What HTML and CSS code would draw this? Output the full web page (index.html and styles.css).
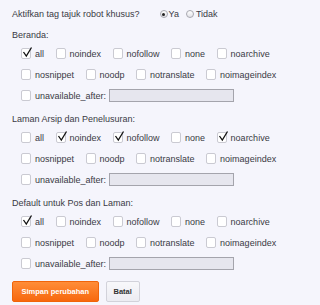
FILE: index.html
```html
<!DOCTYPE html>
<html lang="id">
<head>
  <meta charset="UTF-8">
  <title>Tag tajuk robot khusus</title>
  <link rel="stylesheet" href="styles.css">
</head>
<body>
<div class="question">
  <span>Aktifkan tag tajuk robot khusus?</span>
  <span class="choices">
    <label class="radio-opt"><span class="radio on"></span>Ya</label>
    <label class="radio-opt"><span class="radio"></span>Tidak</label>
  </span>
</div>

<div class="section">
  <div class="section-title">Beranda:</div>
  <div class="row">
    <label class="opt"><span class="cb on"><svg width="12" height="14" viewBox="0 0 12 14"><path d="M1.5 7 L4.3 11 L9.5 2.5" /></svg></span>all</label>
    <label class="opt"><span class="cb"></span>noindex</label>
    <label class="opt"><span class="cb"></span>nofollow</label>
    <label class="opt"><span class="cb"></span>none</label>
    <label class="opt"><span class="cb"></span>noarchive</label>
  </div>
  <div class="row">
    <label class="opt"><span class="cb"></span>nosnippet</label>
    <label class="opt"><span class="cb"></span>noodp</label>
    <label class="opt"><span class="cb"></span>notranslate</label>
    <label class="opt"><span class="cb"></span>noimageindex</label>
  </div>
  <div class="row">
    <label class="opt"><span class="cb"></span>unavailable_after:</label>
    <input class="date" type="text">
  </div>
</div>

<div class="section">
  <div class="section-title">Laman Arsip dan Penelusuran:</div>
  <div class="row">
    <label class="opt"><span class="cb"></span>all</label>
    <label class="opt"><span class="cb on"><svg width="12" height="14" viewBox="0 0 12 14"><path d="M1.5 7 L4.3 11 L9.5 2.5" /></svg></span>noindex</label>
    <label class="opt"><span class="cb on"><svg width="12" height="14" viewBox="0 0 12 14"><path d="M1.5 7 L4.3 11 L9.5 2.5" /></svg></span>nofollow</label>
    <label class="opt"><span class="cb"></span>none</label>
    <label class="opt"><span class="cb on"><svg width="12" height="14" viewBox="0 0 12 14"><path d="M1.5 7 L4.3 11 L9.5 2.5" /></svg></span>noarchive</label>
  </div>
  <div class="row">
    <label class="opt"><span class="cb"></span>nosnippet</label>
    <label class="opt"><span class="cb"></span>noodp</label>
    <label class="opt"><span class="cb"></span>notranslate</label>
    <label class="opt"><span class="cb"></span>noimageindex</label>
  </div>
  <div class="row">
    <label class="opt"><span class="cb"></span>unavailable_after:</label>
    <input class="date" type="text">
  </div>
</div>

<div class="section">
  <div class="section-title">Default untuk Pos dan Laman:</div>
  <div class="row">
    <label class="opt"><span class="cb on"><svg width="12" height="14" viewBox="0 0 12 14"><path d="M1.5 7 L4.3 11 L9.5 2.5" /></svg></span>all</label>
    <label class="opt"><span class="cb"></span>noindex</label>
    <label class="opt"><span class="cb"></span>nofollow</label>
    <label class="opt"><span class="cb"></span>none</label>
    <label class="opt"><span class="cb"></span>noarchive</label>
  </div>
  <div class="row">
    <label class="opt"><span class="cb"></span>nosnippet</label>
    <label class="opt"><span class="cb"></span>noodp</label>
    <label class="opt"><span class="cb"></span>notranslate</label>
    <label class="opt"><span class="cb"></span>noimageindex</label>
  </div>
  <div class="row">
    <label class="opt"><span class="cb"></span>unavailable_after:</label>
    <input class="date" type="text">
  </div>
</div>

<div class="actions">
  <button class="btn primary">Simpan perubahan</button>
  <button class="btn">Batal</button>
</div>
</body>
</html>
```

FILE: styles.css
```css
html, body {
  margin: 0;
  padding: 0;
}
body {
  background: #f5f5fc;
  color: #3a3a44;
  font-family: 'Liberation Sans', Arial, sans-serif;
  font-size: 9px;
  padding: 6px 12px 0;
}
.question {
  display: flex;
  align-items: center;
  height: 16px;
}
.choices {
  display: flex;
  align-items: center;
  margin-left: 20px;
}
.radio-opt {
  display: flex;
  align-items: center;
  margin-right: 7px;
}
.radio {
  width: 8px;
  height: 8px;
  box-sizing: border-box;
  border: 1px solid #a8a8b0;
  border-radius: 50%;
  background: linear-gradient(#fff, #e2e2e8);
  margin-right: 1px;
  display: flex;
  align-items: center;
  justify-content: center;
}
.radio-opt + .radio-opt .radio {
  margin-right: 2px;
}
.radio.on::after {
  content: '';
  width: 3px;
  height: 3px;
  border-radius: 50%;
  background: #222;
}
.section {
  margin-top: 5px;
}
.section-title {
  height: 16px;
  line-height: 16px;
}
.row {
  display: flex;
  align-items: center;
  height: 21px;
  padding-left: 9px;
}
.opt {
  display: flex;
  align-items: center;
}
.opt + .opt {
  margin-left: 11.5px;
}
.cb {
  position: relative;
  width: 10px;
  height: 11px;
  box-sizing: border-box;
  border: 1px solid #cacad2;
  border-radius: 2px;
  background: #fff;
  margin-right: 4px;
}
.cb svg {
  position: absolute;
  left: 0;
  top: -4px;
  fill: none;
  stroke: #111;
  stroke-width: 1.3;
}
.date {
  margin: 0 0 0 3px;
  width: 125px;
  height: 13px;
  box-sizing: border-box;
  border: 1px solid #a4a4ac;
  background: #e6e6ee;
  padding: 0;
}
.actions {
  display: flex;
  margin-top: 7px;
  gap: 7px;
}
.btn {
  height: 21px;
  box-sizing: border-box;
  padding: 0 7px;
  border: 1px solid #d2d2da;
  border-radius: 2px;
  background: linear-gradient(#f8f8fb, #ececf2);
  color: #333;
  font-family: 'Liberation Sans', Arial, sans-serif;
  font-weight: bold;
  font-size: 7.5px;
  cursor: pointer;
}
.btn.primary {
  padding: 0 8.5px;
  border-color: #f0640a;
  background: linear-gradient(#ff8d38, #f7680e);
  color: #fff;
}
```
